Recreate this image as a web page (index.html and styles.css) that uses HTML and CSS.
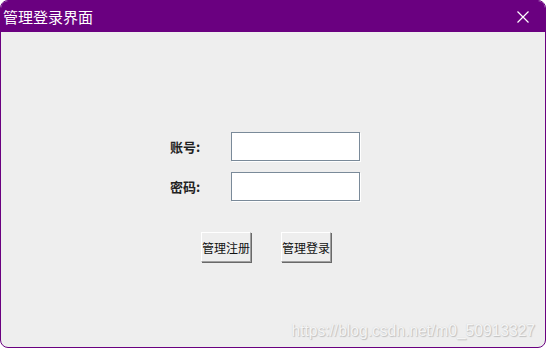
FILE: index.html
```html
<!DOCTYPE html>
<html>
<head>
    <title>管理登录界面</title>
    <link rel="stylesheet" href="styles.css">
</head>
<body>
    <div class="window">
        <div class="titlebar">
            <span class="title">管理登录界面</span>
            <svg class="close" width="12" height="12" viewBox="0 0 12 12">
                <path d="M0.5 0.5 L11.5 11.5 M11.5 0.5 L0.5 11.5" stroke="#fff" stroke-width="1.2" fill="none"/>
            </svg>
        </div>
        <div class="content">
            <div class="form">
                <div class="row">
                    <label class="label">账号:</label>
                    <input class="field" type="text">
                </div>
                <div class="row">
                    <label class="label">密码:</label>
                    <input class="field" type="password">
                </div>
                <div class="buttons">
                    <button class="btn">管理注册</button>
                    <button class="btn">管理登录</button>
                </div>
            </div>
            <div class="watermark">https://blog.csdn.net/m0_50913327</div>
        </div>
    </div>
</body>
</html>
```

FILE: styles.css
```css
body {
    margin: 0;
    font-family: "Noto Sans CJK SC", "Liberation Sans", sans-serif;
}
.window {
    width: 546px;
    height: 348px;
    box-sizing: border-box;
    border: 1px solid #6a0080;
    border-radius: 8px;
    overflow: hidden;
    display: flex;
    flex-direction: column;
    background-color: #eeeeee;
}
.titlebar {
    height: 31px;
    background-color: #6a0080;
    display: flex;
    align-items: center;
    justify-content: space-between;
    padding: 0 16px 0 2px;
    color: white;
}
.title {
    font-size: 15px;
    line-height: 31px;
}
.content {
    position: relative;
    flex: 1;
    padding: 100px 0 0 169px;
}
.form {
    display: flex;
    flex-direction: column;
    gap: 11px;
}
.row {
    display: flex;
    align-items: center;
    height: 29px;
}
.label {
    width: 61px;
    font-size: 13px;
    font-weight: bold;
    color: #222;
}
.field {
    width: 129px;
    height: 29px;
    box-sizing: border-box;
    border: 1px solid #7a8a99;
    box-shadow: 1px 1px 0 #fff;
    background: white;
    margin: 0;
    padding: 2px 4px;
}
.buttons {
    display: flex;
    gap: 30px;
    margin-top: 20px;
    padding-left: 31px;
}
.btn {
    width: 50px;
    height: 30px;
    box-sizing: border-box;
    padding: 0;
    font-family: "Noto Sans CJK SC", sans-serif;
    font-size: 12px;
    color: #111;
    background-color: #eeeeee;
    border: 1px solid;
    border-color: #ffffff #a0a0a0 #a0a0a0 #ffffff;
    box-shadow: 1px 1px 0 #696969;
}
.watermark {
    position: absolute;
    right: 10px;
    bottom: 7px;
    font-family: "Liberation Sans", Arial, sans-serif;
    font-size: 15.6px;
    color: #f5f5f5;
    text-shadow: 1px 1px 1px #c0c0c0, 0 0 1px #cccccc;
}
```
